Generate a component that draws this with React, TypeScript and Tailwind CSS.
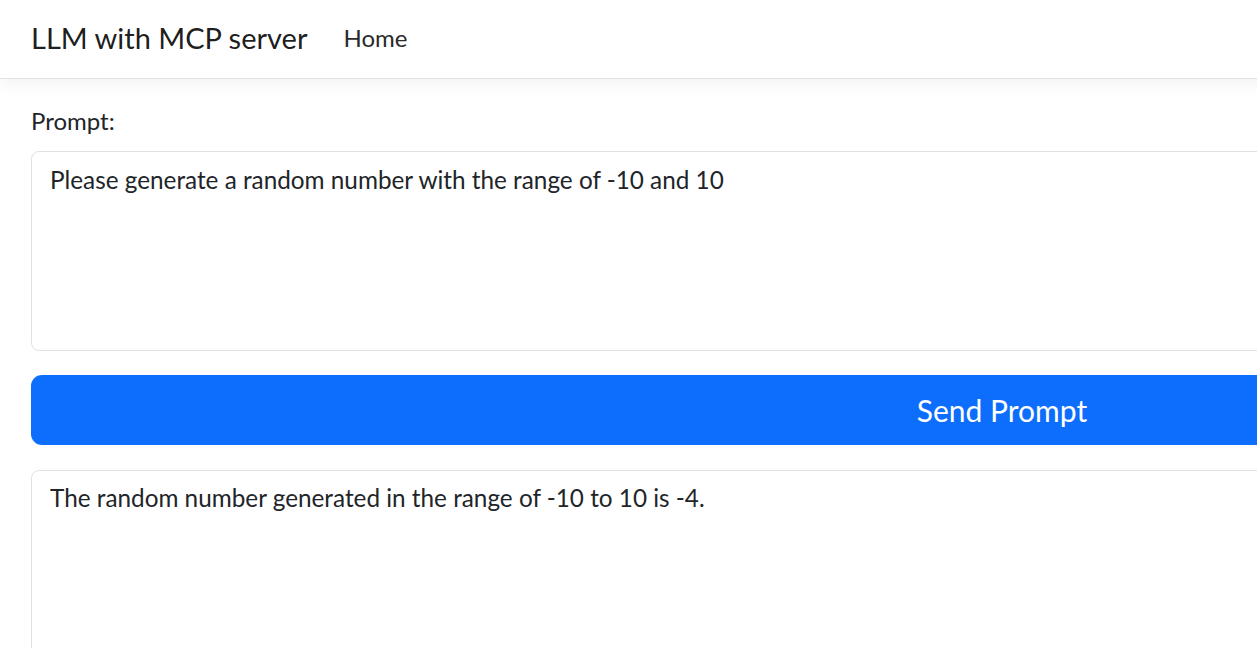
import React from "react";

export default function App() {
  return (
    <div className="w-[1257px] h-[648px] overflow-hidden bg-white text-[#212529]" style={{ fontFamily: "Lato, 'Noto Sans', sans-serif" }}>
      <div className="w-[2004px]">
        <nav className="relative z-10 flex h-[79px] items-center border-b border-[#dee2e6] bg-white px-[31px] pb-[3px] shadow-[0_5px_15px_rgba(0,0,0,0.05)]">
          <span className="text-[29px] leading-[45px] text-[rgba(0,0,0,0.9)]">LLM with MCP server</span>
          <span className="ml-[36px] text-[24px] leading-[36px] text-[#2b2b2b]">Home</span>
        </nav>
        <main className="px-[31px] pt-[24px]">
          <label className="mb-[12px] block text-[24px] leading-[36px]">Prompt:</label>
          <div className="h-[200px] rounded-[8px] border border-[#dee2e6] bg-white px-[18px] py-[10px] text-[24.3px] leading-[36px]">
            Please generate a random number with the range of -10 and 10
          </div>
          <button className="mt-[24px] flex h-[70px] w-full items-center justify-center rounded-[11px] bg-[#0d6efd] text-[30px] leading-[45px] text-white">
            Send Prompt
          </button>
          <div className="mt-[25px] h-[300px] rounded-[8px] border border-[#dee2e6] bg-white px-[18px] py-[9px] text-[24.3px] leading-[36px]">
            The random number generated in the range of -10 to 10 is -4.
          </div>
        </main>
      </div>
    </div>
  );
}
